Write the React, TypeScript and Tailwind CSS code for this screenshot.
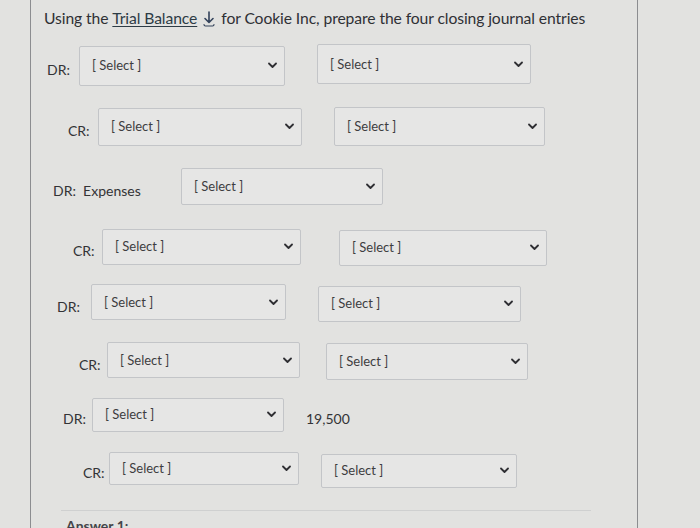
import React from "react";

const Chevron = () => (
  <svg width="9" height="7" viewBox="0 0 9 7" className="shrink-0">
    <path d="M1 1.5 L4.5 5 L8 1.5" fill="none" stroke="#2f2f33" strokeWidth="1.8" strokeLinecap="round" strokeLinejoin="round" />
  </svg>
);

type SelProps = { w: string; h: string; extra?: string };

const Sel = ({ w, h, extra = "" }: SelProps) => (
  <div className={`flex items-center justify-between border border-[#c3c5c8] bg-[#e6e6e5] rounded-[2px] pl-[12px] pr-[7px] ${w} ${h} ${extra}`}>
    <span className="text-[13px] text-[#3d3d3f] leading-none">[ Select ]</span>
    <Chevron />
  </div>
);

const Label = ({ children, extra = "" }: { children: React.ReactNode; extra?: string }) => (
  <span className={`text-[14px] text-[#333336] leading-none mt-[9px] ${extra}`}>{children}</span>
);

export default function App() {
  return (
    <div className="w-[700px] h-[528px] overflow-hidden bg-[#e2e2e0] font-['Lato','Noto_Sans',sans-serif]">
      <div className="ml-[30px] w-[608px] h-[528px] border-l border-r border-[#8c8d90] relative">
        <div className="pt-[7px] pl-[13px] text-[15.7px] text-[#2f3035] tracking-[-0.1px] flex items-center">
          <span>Using the&nbsp;</span>
          <span className="underline underline-offset-2 text-[#2d3b45]">Trial Balance</span>
          <svg width="18" height="18" viewBox="0 0 18 18" className="mx-[3px]">
            <path d="M9 2 V12 M5 8.5 L9 12.5 L13 8.5" fill="none" stroke="#33425a" strokeWidth="1.6" strokeLinecap="round" strokeLinejoin="round" />
            <path d="M4 14.5 Q4 16 5.5 16 H12.5 Q14 16 14 14.5" fill="none" stroke="#33425a" strokeWidth="1.2" strokeLinecap="round" />
          </svg>
          <span>for Cookie Inc, prepare the four closing journal entries</span>
        </div>

        {/* Row 1 */}
        <div className="flex items-center mt-[15px] ml-[16px]">
          <Label extra="w-[32px]">DR:</Label>
          <Sel w="w-[206px]" h="h-[40px]" />
          <Sel w="w-[214px]" h="h-[40px]" extra="ml-[32px] -mt-[3px]" />
        </div>

        {/* Row 2 */}
        <div className="flex items-center mt-[22px] ml-[37px]">
          <Label extra="w-[30px]">CR:</Label>
          <Sel w="w-[204px]" h="h-[38px]" />
          <Sel w="w-[211px]" h="h-[39px]" extra="ml-[32px] -mt-[1px]" />
        </div>

        {/* Row 3 */}
        <div className="flex items-center mt-[22px] ml-[22px]">
          <Label extra="w-[128px]">DR:&nbsp; Expenses</Label>
          <Sel w="w-[202px]" h="h-[37px]" />
        </div>

        {/* Row 4 */}
        <div className="flex items-center mt-[23px] ml-[42px]">
          <Label extra="w-[29px] mt-[4px]">CR:</Label>
          <Sel w="w-[199px]" h="h-[36px]" />
          <Sel w="w-[208px]" h="h-[36px]" extra="ml-[38px] mt-[2px]" />
        </div>

        {/* Row 5 */}
        <div className="flex items-center mt-[17px] ml-[26px]">
          <Label extra="w-[34px] mt-[4px]">DR:</Label>
          <Sel w="w-[195px]" h="h-[36px]" />
          <Sel w="w-[203px]" h="h-[36px]" extra="ml-[32px] mt-[3px]" />
        </div>

        {/* Row 6 */}
        <div className="flex items-center mt-[19px] ml-[48px]">
          <Label extra="w-[28px] mt-[2px]">CR:</Label>
          <Sel w="w-[193px]" h="h-[36px]" />
          <Sel w="w-[202px]" h="h-[37px]" extra="ml-[26px] mt-[2px]" />
        </div>

        {/* Row 7 */}
        <div className="flex items-center mt-[18px] ml-[32px]">
          <Label extra="w-[29px] mt-[2px]">DR:</Label>
          <Sel w="w-[192px]" h="h-[34px]" />
          <span className="ml-[22px] mt-[8px] text-[14px] text-[#333336]">19,500</span>
        </div>

        {/* Row 8 */}
        <div className="flex items-center mt-[17px] ml-[52px]">
          <Label extra="w-[26px] mt-[2px]">CR:</Label>
          <Sel w="w-[190px]" h="h-[33px]" />
          <Sel w="w-[196px]" h="h-[34px]" extra="ml-[22px] mt-[5px]" />
        </div>

        <div className="mt-[22px] ml-[30px] w-[530px] border-t border-[#cfd0d0]" />
        <div className="ml-[35px] mt-[6px] text-[14px] leading-[18px] font-bold text-[#444448]">Answer 1:</div>
      </div>
    </div>
  );
}
